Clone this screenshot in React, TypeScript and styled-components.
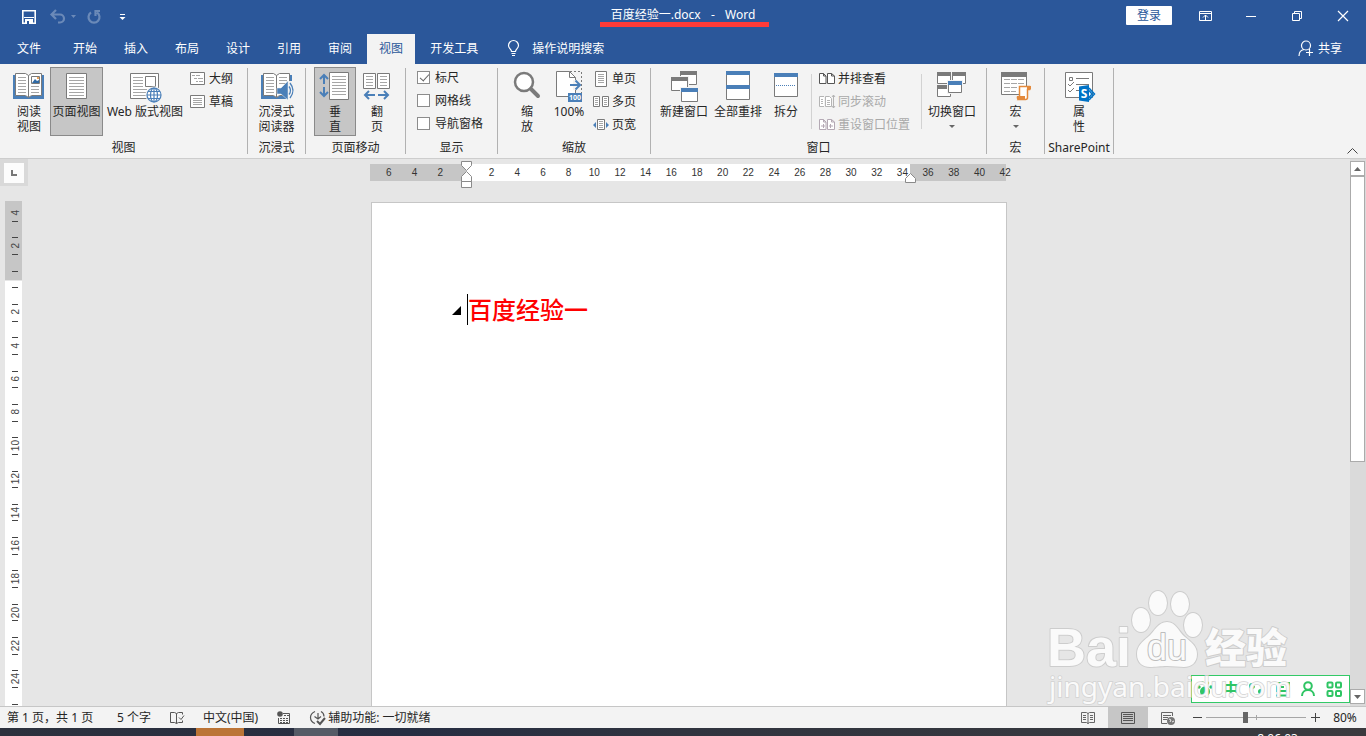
import React from 'react';
import styled, { createGlobalStyle, css } from 'styled-components';

const BLUE = '#2b579a';
const ACCENT = '#4a7fb8';
const GREY = '#7a7a7a';
const LINE = '#a6a6a6';

const GlobalStyle = createGlobalStyle`
  * { box-sizing: border-box; }
  body {
    margin: 0;
    overflow: hidden;
    font-family: "Noto Sans", "Noto Sans CJK SC", sans-serif;
    font-size: 12px;
    line-height: 15px;
    color: #262626;
  }
  button, input { font: inherit; color: inherit; }
  button { background: none; border: 0; padding: 0; margin: 0; white-space: nowrap; }
  svg { display: block; flex: none; overflow: visible; }
`;

const Window = styled.div`
  display: flex;
  flex-direction: column;
  height: 100vh;
  background: #e6e6e6;
`;

/* ---------- title bar ---------- */

const TitleBar = styled.header`
  display: grid;
  grid-template-columns: 1fr auto 1fr;
  align-items: center;
  height: 34px;
  padding-bottom: 3px;
  background: ${BLUE};
  color: #fff;
`;

const QuickAccess = styled.div`
  display: flex;
  align-items: center;
  gap: 9px;
  padding: 2px 0 0 21px;
`;

const QuickButton = styled.button<{ $dim?: boolean }>`
  display: flex;
  align-items: center;
  gap: 5px;
  opacity: ${p => (p.$dim ? 0.3 : 1)};
`;

const Title = styled.h1`
  position: relative;
  margin: 0 0 2px;
  font-size: 12px;
  font-weight: 400;
  line-height: 16px;
  white-space: pre;
`;

const Dash = styled.span`
  padding: 0 4px;
`;

const Underline = styled.span`
  position: absolute;
  left: -11px;
  right: -14px;
  bottom: -4px;
  height: 5px;
  background: #ff3b38;
`;

const WindowTools = styled.div`
  display: flex;
  align-items: center;
  justify-content: flex-end;
`;

const LoginButton = styled.button`
  width: 46px;
  height: 19px;
  margin-right: 10px;
  border-radius: 1px;
  background: #fff;
  color: ${BLUE};
`;

const WindowButton = styled.button`
  display: grid;
  place-items: center;
  width: 46px;
  height: 31px;
`;

/* ---------- tabs ---------- */

const TabBar = styled.nav`
  display: flex;
  align-items: stretch;
  gap: 3px;
  height: 30px;
  padding: 0 24px 0 5px;
  background: ${BLUE};
  color: #fff;
`;

const Tab = styled.button<{ $active?: boolean; $file?: boolean }>`
  padding: 0 12px 2px;
  ${p => p.$file && css`margin-right: 5px;`}
  ${p => p.$active && css`background: #f3f3f3; color: ${BLUE};`}
`;

const TellMe = styled.button`
  display: flex;
  align-items: center;
  gap: 12px;
  margin-left: 14px;
  padding-bottom: 2px;
`;

const Share = styled.button`
  display: flex;
  align-items: center;
  gap: 4px;
  margin-left: auto;
  padding-bottom: 2px;
`;

/* ---------- ribbon ---------- */

const Ribbon = styled.section`
  display: flex;
  height: 95px;
  background: #f3f3f3;
  border-bottom: 1px solid #cdcdcd;
`;

const GroupBox = styled.div<{ $w: number }>`
  display: flex;
  flex-direction: column;
  width: ${p => p.$w}px;
  padding-top: 3px;
`;

const GroupBody = styled.div<{ $pad?: number }>`
  display: flex;
  height: 69px;
  ${p => (p.$pad === undefined ? css`justify-content: center;` : css`padding-left: ${p.$pad}px;`)}
`;

const GroupLabel = styled.div`
  margin-top: 4px;
  line-height: 16px;
  text-align: center;
`;

const Separator = styled.span`
  width: 1px;
  margin: 4px 0;
  background: #b1b1b1;
`;

const InnerSeparator = styled.span<{ $before: number; $after: number }>`
  width: 1px;
  margin: 7px ${p => p.$after}px 7px ${p => p.$before}px;
  background: #d2d2d2;
`;

const BigButtonBox = styled.button<{ $w: number; $active?: boolean }>`
  display: flex;
  flex-direction: column;
  align-items: center;
  gap: 1px;
  width: ${p => p.$w}px;
  padding-top: 3px;
  border: 1px solid ${p => (p.$active ? '#8a8a8a' : 'transparent')};
  ${p => p.$active && css`background: #c6c6c6;`}
`;

const BigLabel = styled.span`
  line-height: 15px;
  text-align: center;
  white-space: pre;
`;

const Caret = styled.span`
  margin-top: 5px;
  border: 3px solid transparent;
  border-top-color: #666;
  border-bottom: 0;
`;

const Rows = styled.div<{ $pad?: number }>`
  display: flex;
  flex-direction: column;
  padding-left: ${p => p.$pad ?? 0}px;
`;

const SmallButton = styled.button<{ $off?: boolean }>`
  display: flex;
  align-items: center;
  gap: 3px;
  height: 23px;
  color: ${p => (p.$off ? '#a9a9a9' : 'inherit')};
`;

const CheckLabel = styled.label`
  display: flex;
  align-items: center;
  gap: 5px;
  height: 23px;
  padding-bottom: 2px;
`;

const CheckBox = styled.input`
  appearance: none;
  width: 13px;
  height: 13px;
  margin: 0;
  border: 1px solid #8c8c8c;
  background: #fff;
  &:checked::after {
    content: '';
    display: block;
    width: 4px;
    height: 8px;
    margin: 0 0 0 4px;
    border: solid #666;
    border-width: 0 1px 1px 0;
    transform: rotate(42deg);
  }
`;

const CollapseButton = styled.button`
  align-self: flex-end;
  margin-left: auto;
  padding: 0 8px 4px;
`;

/* ---------- workspace ---------- */

const Workspace = styled.main`
  position: relative;
  display: flex;
  flex: 1;
  min-height: 0;
`;

const LeftRail = styled.div`
  width: 28px;
  overflow: hidden;
`;

const TabStop = styled.button`
  display: grid;
  width: 28px;
  height: 27px;
  padding: 4px;
  background: #d9d9d9;
  span {
    display: grid;
    place-items: center;
    width: 20px;
    height: 20px;
    background: #fcfcfc;
  }
`;

const VRuler = styled.div`
  display: grid;
  grid-template-rows: repeat(16, 1fr);
  width: 17px;
  height: 536px;
  margin: 15px 0 0 5px;
  padding-top: 3px;
  background: linear-gradient(#c6c6c6 79px, #e6e6e6 79px, #e6e6e6 80px, #fff 80px);
`;

const VMark = styled.div`
  display: grid;
  grid-template-rows: 1fr 1fr;
  padding-left: 7px;
  color: #444;
  font: 10px/8px "Liberation Sans", sans-serif;
`;

const VHalf = styled.div<{ $tick: boolean }>`
  display: grid;
  place-items: center;
  width: 6px;
  background: linear-gradient(#444, #444) 0 0 / ${p => (p.$tick ? 6 : 0)}px 1px no-repeat;
  span {
    writing-mode: vertical-rl;
    transform: rotate(180deg);
  }
`;

const Canvas = styled.div`
  display: flex;
  flex: 1;
  flex-direction: column;
  align-items: center;
  overflow: hidden;
`;

const HRuler = styled.div`
  position: relative;
  width: 638px;
  height: 17px;
  margin-top: 5px;
  padding-left: 6px;
  background: linear-gradient(90deg, #c6c6c6 96px, #fff 96px, #fff 540px, #c6c6c6 540px, #c6c6c6 636px, transparent 636px);
`;

const HScale = styled.div`
  display: grid;
  grid-template-columns: repeat(25, 1fr);
  width: 642px;
  font: 10px/17px "Liberation Sans", sans-serif;
  color: #333;
  text-align: center;
`;

const Marker = styled.span<{ $x: number; $y: number }>`
  position: absolute;
  left: ${p => p.$x}px;
  top: ${p => p.$y}px;
`;

const Page = styled.article`
  flex: 1;
  width: 636px;
  margin-top: 21px;
  padding: 91px 80px 0;
  border: 1px solid #c6c6c6;
  border-bottom: 0;
  background: #fff;
`;

const Heading = styled.h2`
  display: flex;
  align-items: center;
  margin: 0;
  font-size: 24px;
  font-weight: 500;
  line-height: 31px;
  color: #f00;
`;

const HeadingMark = styled.span`
  margin: 2px 6px 0 0;
  border-left: 9px solid transparent;
  border-bottom: 9px solid #000;
`;

const TextCursor = styled.span`
  width: 1px;
  height: 31px;
  background: #000;
`;

const ScrollBar = styled.div`
  display: flex;
  flex-direction: column;
  width: 16px;
  padding: 2px 1px 2px 0;
  background: #dadada;
`;

const ScrollButton = styled.button`
  display: grid;
  place-items: center;
  height: 15px;
  border: 1px solid #ababab;
  background: #fff;
`;

const Thumb = styled.div`
  flex: 286;
  border: 1px solid #ababab;
  background: #fff;
`;

const Track = styled.div`
  flex: 228;
`;

const ImeBar = styled.div`
  position: absolute;
  right: 16px;
  bottom: 3px;
  display: flex;
  align-items: center;
  justify-content: space-around;
  width: 159px;
  height: 28px;
  padding-right: 2px;
  border: 1px solid #33c967;
  background: #fff;
  color: #2fc564;
  font-size: 16px;
  font-weight: 700;
`;

const Watermark = styled.div`
  position: absolute;
  right: 72px;
  bottom: 0;
  pointer-events: none;
`;

/* ---------- status bar ---------- */

const StatusBar = styled.footer`
  display: flex;
  align-items: center;
  height: 22px;
  padding-left: 7px;
  border-top: 1px solid #c6c6c6;
  background: #f3f3f3;
  white-space: nowrap;
`;

const StatusItem = styled.button<{ $min?: number }>`
  display: flex;
  align-items: center;
  gap: 2px;
  min-width: ${p => p.$min ?? 0}px;
  margin-right: 19px;
`;

const ViewButton = styled.button<{ $active?: boolean }>`
  display: grid;
  place-items: center;
  width: 40px;
  height: 21px;
  background: ${p => (p.$active ? '#c6c6c6' : 'transparent')};
`;

const Views = styled.div`
  display: flex;
  margin-left: auto;
`;

const ZoomButton = styled.button`
  width: 18px;
  height: 21px;
  display: grid;
  place-items: center;
`;

const ZoomSlider = styled.input`
  appearance: none;
  width: 100px;
  height: 21px;
  margin: 0;
  background:
    linear-gradient(#a6a6a6, #a6a6a6) 50px 8px / 1px 5px no-repeat,
    linear-gradient(#a6a6a6, #a6a6a6) 0 10px / 100% 1px no-repeat;
  &::-webkit-slider-thumb {
    appearance: none;
    width: 5px;
    height: 11px;
    background: #666;
  }
`;

const ZoomValue = styled.button`
  width: 42px;
`;

const TaskBar = styled.div`
  display: flex;
  height: 8px;
  overflow: hidden;
  background: linear-gradient(90deg, #2c313d, #262d42 30%, #30343f 50%, #3a3a3e);
`;

const TaskItem = styled.span<{ $w: number; $color: string }>`
  width: ${p => p.$w}px;
  background: ${p => p.$color};
`;

const Clock = styled.time`
  margin: 3px 68px 0 auto;
  color: #fff;
`;

/* ---------- icons ---------- */

const Svg = ({ w = 32, h = w, children }: { w?: number; h?: number; children: React.ReactNode }) => (
  <svg width={w} height={h} viewBox={`0 0 ${w} ${h}`} fill="none" aria-hidden="true">{children}</svg>
);

const lines = (x: number, y: number, w: number, n: number, step = 3, color = LINE) => (
  <path d={Array.from({ length: n }, (_, i) => `M${x} ${y + i * step + 0.5}h${w}`).join('')} stroke={color} />
);

const BookShape = () => (
  <>
    <path d="M0 4h3v21h11l2 1 2-1h10V4h3v24H0z" fill={ACCENT} />
    <path d="M2.500 2.500h10l3 2 3-2h10v22h-10l-3 2-3-2h-10z" fill="#fff" stroke={GREY} />
    <path d="M15.500 4.500v22" stroke={GREY} />
  </>
);

const ReadIcon = () => (
  <Svg>
    <BookShape />
    {lines(5, 6, 8, 6)}
    {lines(18, 15, 8, 3)}
    <path d="M18.500 5.500h8v7h-8z" fill="#fff" stroke={GREY} />
    <path d="M19 12l3-4 2 2 2-1v3z" fill="#2f6aa5" />
    <path d="M24 6h2v2h-2z" fill="#e8a35c" />
  </Svg>
);

const ImmersiveIcon = () => (
  <Svg>
    <BookShape />
    {lines(5, 6, 8, 6)}
    {lines(18, 6, 8, 3)}
    <path d="M25 10h7v19h-7z" fill="#f3f3f3" />
    <path d="M16 17h4l7-7v19l-7-6h-4z" fill={ACCENT} stroke="#f3f3f3" strokeWidth="0.500" />
    <path d="M28 15.500q3 4 0 8M29 12q6 7.500 0 15" stroke={ACCENT} strokeWidth="1.300" />
  </Svg>
);

const PageIcon = () => (
  <Svg>
    <path d="M5.500 2.500h20v25h-20z" fill="#fff" stroke={GREY} />
    {lines(8, 6, 15, 7)}
  </Svg>
);

const Globe = ({ x, y, r }: { x: number; y: number; r: number }) => (
  <g stroke={ACCENT} strokeWidth="1.200">
    <circle cx={x} cy={y} r={r} fill="#fff" />
    <ellipse cx={x} cy={y} rx={r / 2} ry={r} />
    <path d={`M${x - r} ${y}h${2 * r}M${x} ${y - r}v${2 * r}M${x - r + 1} ${y - r / 2}h${2 * r - 2}M${x - r + 1} ${y + r / 2}h${2 * r - 2}`} />
  </g>
);

const WebIcon = () => (
  <Svg>
    <path d="M1.500 2.500h28v25h-28z" fill="#fff" stroke={GREY} />
    {lines(4, 6, 10, 4)}
    {lines(4, 18, 14, 3)}
    <path d="M16.500 5.500h10v10h-10z" fill="#fff" stroke={GREY} />
    <circle cx="25" cy="24" r="8.500" fill="#f3f3f3" />
    <Globe x={25} y={24} r={7} />
  </Svg>
);

const VerticalIcon = () => (
  <Svg>
    <path d="M10.500 1.500h19v27h-19z" fill="#fff" stroke={GREY} />
    {lines(13, 5, 14, 7)}
    <path d="M5 4v9M1 8l4-4 4 4M5 16v9M1 21l4 4 4-4" stroke={ACCENT} strokeWidth="2" />
  </Svg>
);

const FlipIcon = () => (
  <Svg>
    <path d="M2.500 2.500h12v15h-12zM16.500 2.500h12v15h-12z" fill="#fff" stroke={GREY} />
    {lines(5, 5, 7, 4)}
    {lines(19, 5, 7, 4)}
    <path d="M14 24H4M8 20l-4 4 4 4M17 24h10M23 20l4 4-4 4" stroke={ACCENT} strokeWidth="2" />
  </Svg>
);

const ZoomIcon = () => (
  <Svg>
    <circle cx="13" cy="11" r="9" fill="#fff" stroke={GREY} strokeWidth="2.500" />
    <path d="M20 18l7 7" stroke={GREY} strokeWidth="4" strokeLinecap="round" />
  </Svg>
);

const HundredIcon = () => (
  <Svg>
    <path d="M17 .5h11.500V22" stroke={GREY} strokeDasharray="2 2" />
    <path d="M3.500 .5h13l6 6v19h-19z" fill="#fff" stroke={GREY} />
    <path d="M16.500.5v6h6" stroke={GREY} />
    <path d="M20 9h6v10h-6z" fill="#f3f3f3" />
    <path d="M17 14h10M22.500 9.500l4.500 4.500-4.500 4.500" stroke={ACCENT} strokeWidth="2" />
    <path d="M15 22h14v9H15z" fill={ACCENT} />
    <text x="22" y="29" fontSize="7" fontWeight="700" textAnchor="middle" fill="#fff">100</text>
  </Svg>
);

type WinProps = { x: number; y: number; w: number; h: number; c?: string; halo?: boolean };

const Win = ({ x, y, w, h, c = GREY, halo }: WinProps) => (
  <>
    {halo && <path d={`M${x - 1} ${y - 1}h${w + 2}v${h + 2}h-${w + 2}z`} fill="#f3f3f3" />}
    <path d={`M${x + 0.5} ${y + 0.5}h${w - 1}v${h - 1}h-${w - 1}z`} fill="#fff" stroke={GREY} />
    <path d={`M${x} ${y}h${w}v4h-${w}z`} fill={c} />
  </>
);

const NewWindowIcon = () => (
  <Svg><Win x={12} y={0} w={17} h={14} /><Win x={3} y={6} w={17} h={14} halo /><Win x={13} y={17} w={17} h={14} c={ACCENT} halo /></Svg>
);

const ArrangeIcon = () => (
  <Svg><Win x={4} y={0} w={24} h={15} c={ACCENT} /><Win x={4} y={14} w={24} h={15} c={ACCENT} /></Svg>
);

const SplitIcon = () => (
  <Svg>
    <Win x={4} y={2} w={24} h={24} c={ACCENT} />
    <path d="M6 14.500h20" stroke={ACCENT} strokeDasharray="1 1" />
  </Svg>
);

const SwitchIcon = () => (
  <Svg>
    <Win x={1} y={1} w={14} h={12} /><Win x={16} y={1} w={14} h={12} /><Win x={1} y={14} w={14} h={12} />
    <Win x={12} y={10} w={14} h={12} c={ACCENT} halo />
  </Svg>
);

const MacroIcon = () => (
  <Svg>
    <path d="M1.500 1.500h25v22h-25z" fill="#fff" stroke={GREY} />
    <path d="M1 1h26v5H1z" fill={GREY} />
    <path d="M4 8.500h20M4 12.500h20M4 16.500h14M4 20.500h12" stroke={LINE} strokeDasharray="6 1" />
    <path d="M19.500 15.500h10v3h-2v8q0 2-2 2h-7q1-1 1-3z" fill="#fff" stroke="#e48a3c" strokeWidth="1.500" />
    <path d="M17 25h8v4h-7q-2-1-1-4zM27 15h4v3.500h-4z" fill="#e48a3c" />
  </Svg>
);

const PropertyIcon = () => (
  <Svg>
    <path d="M2.500 1.500h27v25h-27z" fill="#fff" stroke={GREY} />
    <path d="M6.500 6.500h3v3h-3zM13 7.500h13M13 13.500h13M13 19.500h5M5 13l2 2 4-4M5 19l2 2 4-4" stroke={GREY} />
    <path d="M26 17l5.500 6-5.500 6M26 19.500l3 3.500-3 3.500" stroke="#0072c6" strokeWidth="1.500" />
    <path d="M16 15.500L26 14v17l-10-1.500z" fill="#0072c6" />
    <text x="21" y="27" fontSize="12" fontWeight="700" textAnchor="middle" fill="#fff">S</text>
  </Svg>
);

const OutlineIcon = () => (
  <Svg w={16} h={14}>
    <path d="M.5.5h14v12H.5z" fill="#fff" stroke={GREY} />
    <path d="M2 3.500h3M6 3.500h4M4 6.500h3M8 6.500h5M6 9.500h2M9 9.500h4" stroke={LINE} />
  </Svg>
);

const DraftIcon = () => (
  <Svg w={16} h={14}>
    <path d="M.5.5h14v12H.5z" fill="#fff" stroke={GREY} />
    {lines(3, 3, 9, 4, 2)}
  </Svg>
);

const OnePageIcon = () => (
  <Svg w={16}><path d="M2.500.5h11v15h-11z" fill="#fff" stroke={GREY} />{lines(5, 3, 6, 5, 2)}</Svg>
);

const MultiPageIcon = () => (
  <Svg w={16}><path d="M.5 2.500h6v10h-6zM9.500 2.500h6v10h-6z" fill="#fff" stroke={GREY} />{lines(2, 4, 3, 4, 2)}{lines(11, 4, 3, 4, 2)}</Svg>
);

const PageWidthIcon = () => (
  <Svg w={16}>
    <path d="M4.500 2.500h7v10h-7z" fill="#fff" stroke={GREY} />{lines(6, 4, 4, 4, 2)}
    <path d="M3 5v6L0 8zM13 5v6l3-3z" fill={ACCENT} />
  </Svg>
);

const TwoPages = ({ c, arrows }: { c: string; arrows?: boolean }) => (
  <Svg w={16}>
    <path d="M.5 2.500h4l2.500 2.500v7.500H.5zM4.500 2.500v2.500h2.500M8.500 2.500h4l3 2.500v7.500h-7zM12.500 2.500v2.500h3" fill="#fff" stroke={c} />
    {arrows && <path d="M2 9h4M4.500 7v4M10 9h4M11.500 7v4" stroke={c} />}
  </Svg>
);

const SyncScrollIcon = () => (
  <Svg w={16}>
    <path d="M5 2.500H.500v10H5M6.500 2.500h4l2 2v8h-6z" fill="#fff" stroke="#b4b4b4" />
    <path d="M2 5.500h2M2 7.500h2M2 9.500h2M8 6.500h3M8 8.500h3M8 10.500h3M14.500 1v13M13 3l1.500-2L16 3M13 12l1.500 2 1.500-2" stroke="#b4b4b4" />
  </Svg>
);

const PAW_TOES = [
  [97, 33, 9, 12],
  [114, 16, 9, 12],
  [136, 17, 9, 12],
  [149, 38, 9, 12],
];

const BaiduMark = () => (
  <svg width="250" height="119" viewBox="0 0 250 119" aria-hidden="true">
    <g
      fill="#fafafa"
      stroke="#cdcdcd"
      strokeWidth="2"
      strokeLinejoin="round"
      paintOrder="stroke"
      fontFamily='"Liberation Sans", sans-serif'
    >
      <text x="3" y="79" fontSize="54" fontWeight="700">Bai</text>
      {PAW_TOES.map(([x, y, rx, ry]) => <ellipse key={x} cx={x} cy={y} rx={rx} ry={ry} />)}
      <path d="M123 35c-9 0-12 9-19 15-6 5-11 9-11 17 0 9 6 13 13 13 6 0 10-1 17-1s12 1 17 1c7 0 13-4 13-13 0-8-6-12-12-17-7-6-9-15-18-15z" />
      <text x="103" y="73" fontSize="36" stroke="#bdbdbd">du</text>
      <text x="161" y="76" fontSize="41" fontWeight="900" fontFamily='"Noto Sans CJK SC", sans-serif'>经验</text>
    </g>
    <text
      x="5" y="110" fontSize="28" fill="#fafafa" stroke="#d2d2d2" strokeWidth="1.500" paintOrder="stroke"
      fontFamily='"Noto Sans", sans-serif'
    >jingyan.baidu.com</text>
  </svg>
);

/* ---------- composed parts ---------- */

type GroupProps = { label: string; w: number; pad?: number; children: React.ReactNode };

const Group = ({ label, w, pad, children }: GroupProps) => (
  <>
    <GroupBox $w={w}>
      <GroupBody $pad={pad}>{children}</GroupBody>
      <GroupLabel>{label}</GroupLabel>
    </GroupBox>
    <Separator />
  </>
);

type BigProps = { icon: React.ReactNode; label: string; w: number; active?: boolean; menu?: boolean };

const BigButton = ({ icon, label, w, active, menu }: BigProps) => (
  <BigButtonBox $w={w} $active={active}>
    {icon}
    <BigLabel>{label}</BigLabel>
    {menu && <Caret />}
  </BigButtonBox>
);

const TABS = ['文件', '开始', '插入', '布局', '设计', '引用', '审阅', '视图', '开发工具'];
const H_MARKS = Array.from({ length: 25 }, (_, i) => Math.abs(i * 2 - 6));
const V_MARKS = Array.from({ length: 16 }, (_, i) => (i < 15 ? Math.abs(i * 2 - 4) : 0));

export default function App() {
  return (
    <Window>
      <GlobalStyle />
      <TitleBar>
        <QuickAccess>
          <QuickButton aria-label="保存">
            <Svg w={20} h={16}><path d="M1.800 1.800h12.400v12.400H1.800z" stroke="#fff" strokeWidth="1.600" /><path d="M3 8h10v1H3zM4 10h8v5H4z" fill="#fff" /><path d="M6 12h2v3H6z" fill={BLUE} /></Svg>
          </QuickButton>
          <QuickButton $dim aria-label="撤消">
            <Svg w={16}><path d="M2 5.500h8a4 4 0 010 8H8M6 1L1.500 5.500 6 10" stroke="#fff" strokeWidth="2.200" /></Svg>
            <Svg w={6} h={4}><path d="M0 0h5L2.500 3z" fill="#fff" /></Svg>
          </QuickButton>
          <QuickButton $dim aria-label="恢复">
            <Svg w={16}><path d="M5 3.500a5.500 5.500 0 106 0M14 2H9.500v5" stroke="#fff" strokeWidth="2.200" /></Svg>
          </QuickButton>
          <QuickButton aria-label="自定义快速访问工具栏">
            <Svg w={20} h={8}><path d="M9 1.500h5" stroke="#fff" /><path d="M8.500 4h6L11.500 7z" fill="#fff" /></Svg>
          </QuickButton>
        </QuickAccess>
        <Title>百度经验一.docx<Dash>{'  -  '}</Dash>Word<Underline /></Title>
        <WindowTools>
          <LoginButton>登录</LoginButton>
          <WindowButton aria-label="功能区显示选项">
            <Svg w={13} h={10}><path d="M.5.5h12v9H.5zM.5 2.500h12M6.500 9V4M4 6.500L6.500 4 9 6.500" stroke="#fff" /></Svg>
          </WindowButton>
          <WindowButton aria-label="最小化"><Svg w={10}><path d="M0 5.500h10" stroke="#fff" /></Svg></WindowButton>
          <WindowButton aria-label="还原"><Svg w={10}><path d="M.5 2.500h7v7h-7zM2.500 2V.500h7v7H8" stroke="#fff" /></Svg></WindowButton>
          <WindowButton aria-label="关闭"><Svg w={10}><path d="M0 0l10 10M10 0L0 10" stroke="#fff" strokeWidth="1.200" /></Svg></WindowButton>
        </WindowTools>
      </TitleBar>

      <TabBar>
        {TABS.map(t => <Tab key={t} $active={t === '视图'} $file={t === '文件'}>{t}</Tab>)}
        <TellMe>
          <Svg w={13} h={17}>
            <path d="M4.500 11.500C4.500 9 1.500 8.500 1.500 5.500a5 5 0 0110 0c0 3-3 3.500-3 6zM4.500 13.500h4M5 15.500h3" stroke="#fff" strokeWidth="1.200" />
          </Svg>
          操作说明搜索
        </TellMe>
        <Share>
          <Svg w={16}><circle cx="8" cy="5.500" r="4.500" stroke="#fff" strokeWidth="1.200" /><path d="M1 16c0-4 2-6 5-6.500M8 12.500h7M11.500 9v7" stroke="#fff" strokeWidth="1.200" /></Svg>
          共享
        </Share>
      </TabBar>

      <Ribbon>
        <Group label="视图" w={247} pad={8}>
          <BigButton w={42} icon={<ReadIcon />} label={'阅读\n视图'} />
          <BigButton w={53} icon={<PageIcon />} label="页面视图" active />
          <BigButton w={84} icon={<WebIcon />} label="Web 版式视图" />
          <Rows $pad={3}>
            <SmallButton><OutlineIcon />大纲</SmallButton>
            <SmallButton><DraftIcon />草稿</SmallButton>
          </Rows>
        </Group>
        <Group label="沉浸式" w={57}>
          <BigButton w={44} icon={<ImmersiveIcon />} label={'沉浸式\n阅读器'} />
        </Group>
        <Group label="页面移动" w={99} pad={8}>
          <BigButton w={42} icon={<VerticalIcon />} label={'垂\n直'} active />
          <BigButton w={42} icon={<FlipIcon />} label={'翻\n页'} />
        </Group>
        <Group label="显示" w={91} pad={11}>
          <Rows>
            <CheckLabel><CheckBox type="checkbox" defaultChecked />标尺</CheckLabel>
            <CheckLabel><CheckBox type="checkbox" />网格线</CheckLabel>
            <CheckLabel><CheckBox type="checkbox" />导航窗格</CheckLabel>
          </Rows>
        </Group>
        <Group label="缩放" w={152} pad={8}>
          <BigButton w={42} icon={<ZoomIcon />} label={'缩\n放'} />
          <BigButton w={42} icon={<HundredIcon />} label="100%" />
          <Rows $pad={3}>
            <SmallButton><OnePageIcon />单页</SmallButton>
            <SmallButton><MultiPageIcon />多页</SmallButton>
            <SmallButton><PageWidthIcon />页宽</SmallButton>
          </Rows>
        </Group>
        <Group label="窗口" w={335} pad={6}>
          <BigButton w={54} icon={<NewWindowIcon />} label="新建窗口" />
          <BigButton w={54} icon={<ArrangeIcon />} label="全部重排" />
          <BigButton w={42} icon={<SplitIcon />} label="拆分" />
          <InnerSeparator $before={4} $after={7} />
          <Rows>
            <SmallButton><TwoPages c="#555" />并排查看</SmallButton>
            <SmallButton $off><SyncScrollIcon />同步滚动</SmallButton>
            <SmallButton $off><TwoPages c="#b4a9b4" arrows />重设窗口位置</SmallButton>
          </Rows>
          <InnerSeparator $before={11} $after={3} />
          <BigButton w={54} icon={<SwitchIcon />} label="切换窗口" menu />
        </Group>
        <Group label="宏" w={57}>
          <BigButton w={42} icon={<MacroIcon />} label="宏" menu />
        </Group>
        <Group label="SharePoint" w={68}>
          <BigButton w={42} icon={<PropertyIcon />} label={'属\n性'} />
        </Group>
        <CollapseButton aria-label="折叠功能区">
          <Svg w={11} h={6}><path d="M.5 5.500l5-5 5 5" stroke="#444" /></Svg>
        </CollapseButton>
      </Ribbon>

      <Workspace>
        <LeftRail>
          <TabStop aria-label="制表符">
            <span><Svg w={6}><path d="M1 0v5h5" stroke="#777" strokeWidth="2" /></Svg></span>
          </TabStop>
          <VRuler>
            {V_MARKS.map((n, i) => (
              <VMark key={i}>
                <VHalf $tick={i > 0}><span>{n || ''}</span></VHalf>
                <VHalf $tick />
              </VMark>
            ))}
          </VRuler>
        </LeftRail>
        <Canvas>
          <HRuler>
            <HScale>{H_MARKS.map((n, i) => <span key={i}>{n || ''}</span>)}</HScale>
            <Marker $x={91} $y={-3}>
              <Svg w={11} h={28}>
                <path d="M.5.5h10v4l-5 5-5-5zM.5 20.500v-5l5-5 5 5v5zM.5 20.500h10v6H.5z" fill="#fff" stroke="#8a8a8a" />
              </Svg>
            </Marker>
            <Marker $x={535} $y={9}>
              <Svg w={11} h={10}><path d="M.5 9.500v-4l5-5 5 5v4z" fill="#fff" stroke="#8a8a8a" /></Svg>
            </Marker>
          </HRuler>
          <Page>
            <Heading><HeadingMark /><TextCursor />百度经验一</Heading>
          </Page>
        </Canvas>
        <ScrollBar>
          <ScrollButton aria-label="向上滚动"><Svg w={7} h={4}><path d="M0 4h7L3.500 0z" fill="#666" /></Svg></ScrollButton>
          <Thumb />
          <Track />
          <ScrollButton aria-label="向下滚动"><Svg w={7} h={4}><path d="M0 0h7L3.500 4z" fill="#666" /></Svg></ScrollButton>
        </ScrollBar>
        <ImeBar>
          <Svg w={16}>
            <g fill="currentColor"><circle cx="8" cy="10.500" r="5" /><circle cx="2" cy="6" r="1.700" /><circle cx="5.500" cy="2" r="1.700" /><circle cx="10.500" cy="2" r="1.700" /><circle cx="14" cy="6" r="1.700" /></g>
          </Svg>
          <span>中</span>
          <Svg w={16}><path d="M5 5a2 2 0 11-2-2M13 12c0 2-2 3-3 3" stroke="currentColor" strokeWidth="2" /><circle cx="11.500" cy="10.500" r="2.500" fill="currentColor" /></Svg>
          <Svg w={16}><path d="M1 2h14v8H3V2M2 14.500h12M7 6h3" stroke="currentColor" strokeWidth="2" /></Svg>
          <Svg w={16}><circle cx="8" cy="5" r="3.800" stroke="currentColor" strokeWidth="2" /><path d="M2 15c0-4 3-6 6-6s6 2 6 6" stroke="currentColor" strokeWidth="2" /></Svg>
          <Svg w={16}>
            <g stroke="currentColor" strokeWidth="2"><rect x="1.500" y="1.500" width="5" height="5" rx="1" /><rect x="10" y="1.500" width="5" height="5" rx="1" /><rect x="1.500" y="10" width="5" height="5" rx="1" /><rect x="10" y="10" width="5" height="5" rx="1" /></g>
          </Svg>
        </ImeBar>
        <Watermark><BaiduMark /></Watermark>
      </Workspace>

      <StatusBar>
        <StatusItem $min={91}>第 1 页，共 1 页</StatusItem>
        <StatusItem>5 个字</StatusItem>
        <StatusItem aria-label="校对">
          <Svg w={14}><path d="M.5 1.500h4l2 1 2-1h4v2M6.500 2.500v10l-2-1h-4v-10M6.500 12.500l2-1h4v-2M9 6.500l2 2 3-4" stroke="#555" /></Svg>
        </StatusItem>
        <StatusItem>中文(中国)</StatusItem>
        <StatusItem aria-label="宏录制">
          <Svg w={14}><path d="M6 2.500h6.500v10H1.500V7" stroke="#555" /><path d="M7 4.500h5M3 7.500h8M3 9.500h8M3 11.500h8" stroke="#555" strokeDasharray="2 1" /><circle cx="3" cy="3" r="2.800" fill="#555" /></Svg>
        </StatusItem>
        <StatusItem>
          <Svg w={16}><path d="M5 1.500C-1 4-1 11 5 13.500M11 1.500c2 1 3 3 3 5M8 3v6M4.500 6.500L8 9l3-2.500" stroke="#555" strokeWidth="1.200" /><path d="M7 11l3 3 5-6" stroke="#555" strokeWidth="2" /></Svg>
          辅助功能: 一切就绪
        </StatusItem>
        <Views>
          <ViewButton aria-label="阅读视图"><Svg w={14}><path d="M.5 1.500h5l1.500 1 1.500-1h5v10h-5l-1.500 1-1.500-1h-5zM7 2v11M2 4.500h3M2 6.500h3M2 8.500h3M9 4.500h3M9 6.500h3M9 8.500h3" stroke="#666" /></Svg></ViewButton>
          <ViewButton $active aria-label="页面视图"><Svg w={14}><path d="M.5 1.500h13v11H.5zM2 3.500h10M2 5.500h10M2 7.500h10M2 9.500h10" stroke="#555" /></Svg></ViewButton>
          <ViewButton aria-label="Web 版式视图"><Svg w={14}><path d="M6 12.500H.5v-11h11V5M2 4.500h8M2 6.500h5M2 8.500h4" stroke="#666" /><circle cx="10" cy="10" r="4" fill="#777" /><path d="M8 8l2 1-1 2M11 11l2-1" stroke="#eee" /></Svg></ViewButton>
        </Views>
        <ZoomButton aria-label="缩小"><Svg w={9}><path d="M0 4.500h9" stroke="#444" /></Svg></ZoomButton>
        <ZoomSlider type="range" min={10} max={190} defaultValue={80} aria-label="显示比例" />
        <ZoomButton aria-label="放大"><Svg w={9}><path d="M0 4.500h9M4.500 0v9" stroke="#444" /></Svg></ZoomButton>
        <ZoomValue>80%</ZoomValue>
      </StatusBar>
      <TaskBar>
        <TaskItem $w={196} $color="transparent" />
        <TaskItem $w={48} $color="#bb7436" />
        <TaskItem $w={50} $color="transparent" />
        <TaskItem $w={44} $color="#555b66" />
        <Clock>8:06:03</Clock>
      </TaskBar>
    </Window>
  );
}
